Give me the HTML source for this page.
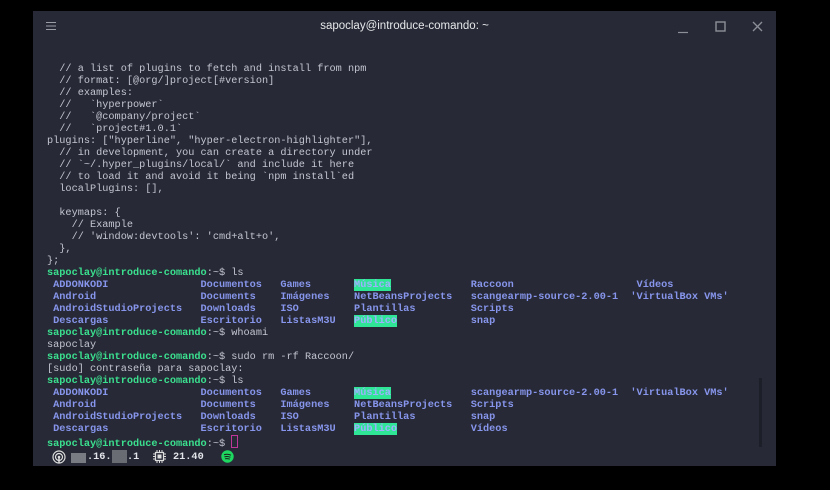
<!DOCTYPE html>
<html><head><meta charset="utf-8"><style>
html,body{margin:0;padding:0;background:#000;width:830px;height:490px;overflow:hidden}
#win{position:absolute;left:33px;top:11px;width:743px;height:455px;background:#272a36}
#title{position:absolute;left:0;right:0;top:9px;text-align:center;font:11.5px "Liberation Sans","DejaVu Sans",sans-serif;color:#e6e7ea}
pre{position:absolute;left:14px;top:52px;margin:0;font:10.24px/12px "Liberation Mono","DejaVu Sans Mono",monospace;color:#c3c6d0;white-space:pre}
.g{color:#3be08f;font-weight:bold}
.b{color:#8795ec;font-weight:bold}
.c{display:inline-block}
.w0{width:25ch}.w1{width:13ch}.w2{width:12ch}.w3{width:19ch}.w4{width:26ch}.w4b{width:27ch}
.h{background:#2fe596;color:#9fb0ff;font-weight:bold}
.cur{display:inline-block;width:5px;height:11px;border:1px solid #c0379a;vertical-align:-2px}
#sb{position:absolute;left:726px;top:367px;width:3px;height:69px;background:#1d1f28}
</style></head><body>
<div id="win">
<svg style="position:absolute;left:13px;top:10px" width="11" height="10"><path d="M0 1.5H10M0 5H10M0 8.5H10" stroke="#9a9ca6" stroke-width="1"/></svg>
<div id="title">sapoclay@introduce-comando: ~</div>
<svg style="position:absolute;left:645px;top:20px" width="12" height="4"><path d="M0 1.5H10" stroke="#8d8f98" stroke-width="1.2"/></svg>
<svg style="position:absolute;left:682px;top:10px" width="12" height="12"><rect x="1" y="1" width="9" height="9" fill="none" stroke="#8d8f98" stroke-width="1.4"/></svg>
<svg style="position:absolute;left:719px;top:10px" width="12" height="12"><path d="M1 1L10 10M10 1L1 10" stroke="#8d8f98" stroke-width="1.3"/></svg>
<pre>  // a list of plugins to fetch and install from npm
  // format: [@org/]project[#version]
  // examples:
  //   `hyperpower`
  //   `@company/project`
  //   `project#1.0.1`
plugins: ["hyperline", "hyper-electron-highlighter"],
  // in development, you can create a directory under
  // `~/.hyper_plugins/local/` and include it here
  // to load it and avoid it being `npm install`ed
  localPlugins: [],

  keymaps: {
    // Example
    // 'window:devtools': 'cmd+alt+o',
  },
};
<span class="g">sapoclay@introduce-comando</span>:~$ ls
<span class="b"><span class="c w0"> ADDONKODI</span><span class="c w1">Documentos</span><span class="c w2">Games</span><span class="c w3"><span class="h">Música</span></span><span class="c w4b">Raccoon</span>Vídeos
<span class="c w0"> Android</span><span class="c w1">Documents</span><span class="c w2">Imágenes</span><span class="c w3">NetBeansProjects</span><span class="c w4">scangearmp-source-2.00-1</span>'VirtualBox VMs'
<span class="c w0"> AndroidStudioProjects</span><span class="c w1">Downloads</span><span class="c w2">ISO</span><span class="c w3">Plantillas</span>Scripts
<span class="c w0"> Descargas</span><span class="c w1">Escritorio</span><span class="c w2">ListasM3U</span><span class="c w3"><span class="h">Público</span></span>snap</span>
<span class="g">sapoclay@introduce-comando</span>:~$ whoami
sapoclay
<span class="g">sapoclay@introduce-comando</span>:~$ sudo rm -rf Raccoon/
[sudo] contraseña para sapoclay:
<span class="g">sapoclay@introduce-comando</span>:~$ ls
<span class="b"><span class="c w0"> ADDONKODI</span><span class="c w1">Documentos</span><span class="c w2">Games</span><span class="c w3"><span class="h">Música</span></span><span class="c w4">scangearmp-source-2.00-1</span>'VirtualBox VMs'
<span class="c w0"> Android</span><span class="c w1">Documents</span><span class="c w2">Imágenes</span><span class="c w3">NetBeansProjects</span>Scripts
<span class="c w0"> AndroidStudioProjects</span><span class="c w1">Downloads</span><span class="c w2">ISO</span><span class="c w3">Plantillas</span>snap
<span class="c w0"> Descargas</span><span class="c w1">Escritorio</span><span class="c w2">ListasM3U</span><span class="c w3"><span class="h">Público</span></span>Vídeos</span>
<span class="g">sapoclay@introduce-comando</span>:~$ <span class="cur"></span></pre>
<div id="sb"></div>
<svg style="position:absolute;left:19px;top:439px" width="14" height="14"><circle cx="7" cy="7" r="6" fill="none" stroke="#ddd" stroke-width="1.2"/><circle cx="7" cy="7" r="3.5" fill="none" stroke="#ddd" stroke-width="1.2"/><circle cx="7" cy="7" r="1.3" fill="#ddd"/><path d="M7 7V13" stroke="#ddd" stroke-width="1.5"/></svg>
<div style="position:absolute;left:38px;top:442px;width:15px;height:10px;background:#7a7c84"></div>
<div style="position:absolute;left:54px;top:440px;font:bold 10.24px 'Liberation Mono',monospace;color:#e4e5ea">.16.</div>
<div style="position:absolute;left:79px;top:439px;width:15px;height:13px;background:#6a6c74"></div>
<div style="position:absolute;left:94px;top:440px;font:bold 10.24px 'Liberation Mono',monospace;color:#e4e5ea">.1</div>
<svg style="position:absolute;left:120px;top:439px" width="13" height="13"><rect x="2.5" y="2.5" width="8" height="8" fill="none" stroke="#ddd" stroke-width="1.2"/><rect x="4.5" y="4.5" width="4" height="4" fill="#ddd"/><path d="M0 4H2M0 6.5H2M0 9H2M11 4H13M11 6.5H13M11 9H13M4 0V2M6.5 0V2M9 0V2M4 11V13M6.5 11V13M9 11V13" stroke="#ddd"/></svg>
<div style="position:absolute;left:140px;top:440px;font:bold 10.24px 'Liberation Mono',monospace;color:#e4e5ea">21.40</div>
<svg style="position:absolute;left:188px;top:439px" width="13" height="13"><circle cx="6.5" cy="6.5" r="6.2" fill="#1ed760"/><path d="M3 4.8Q6.5 3.6 10 5.2M3.5 6.9Q6.5 6 9.4 7.3M4 8.8Q6.5 8.2 8.8 9.2" stroke="#1b1b1b" stroke-width="1" fill="none"/></svg>
</div>
</body></html>
